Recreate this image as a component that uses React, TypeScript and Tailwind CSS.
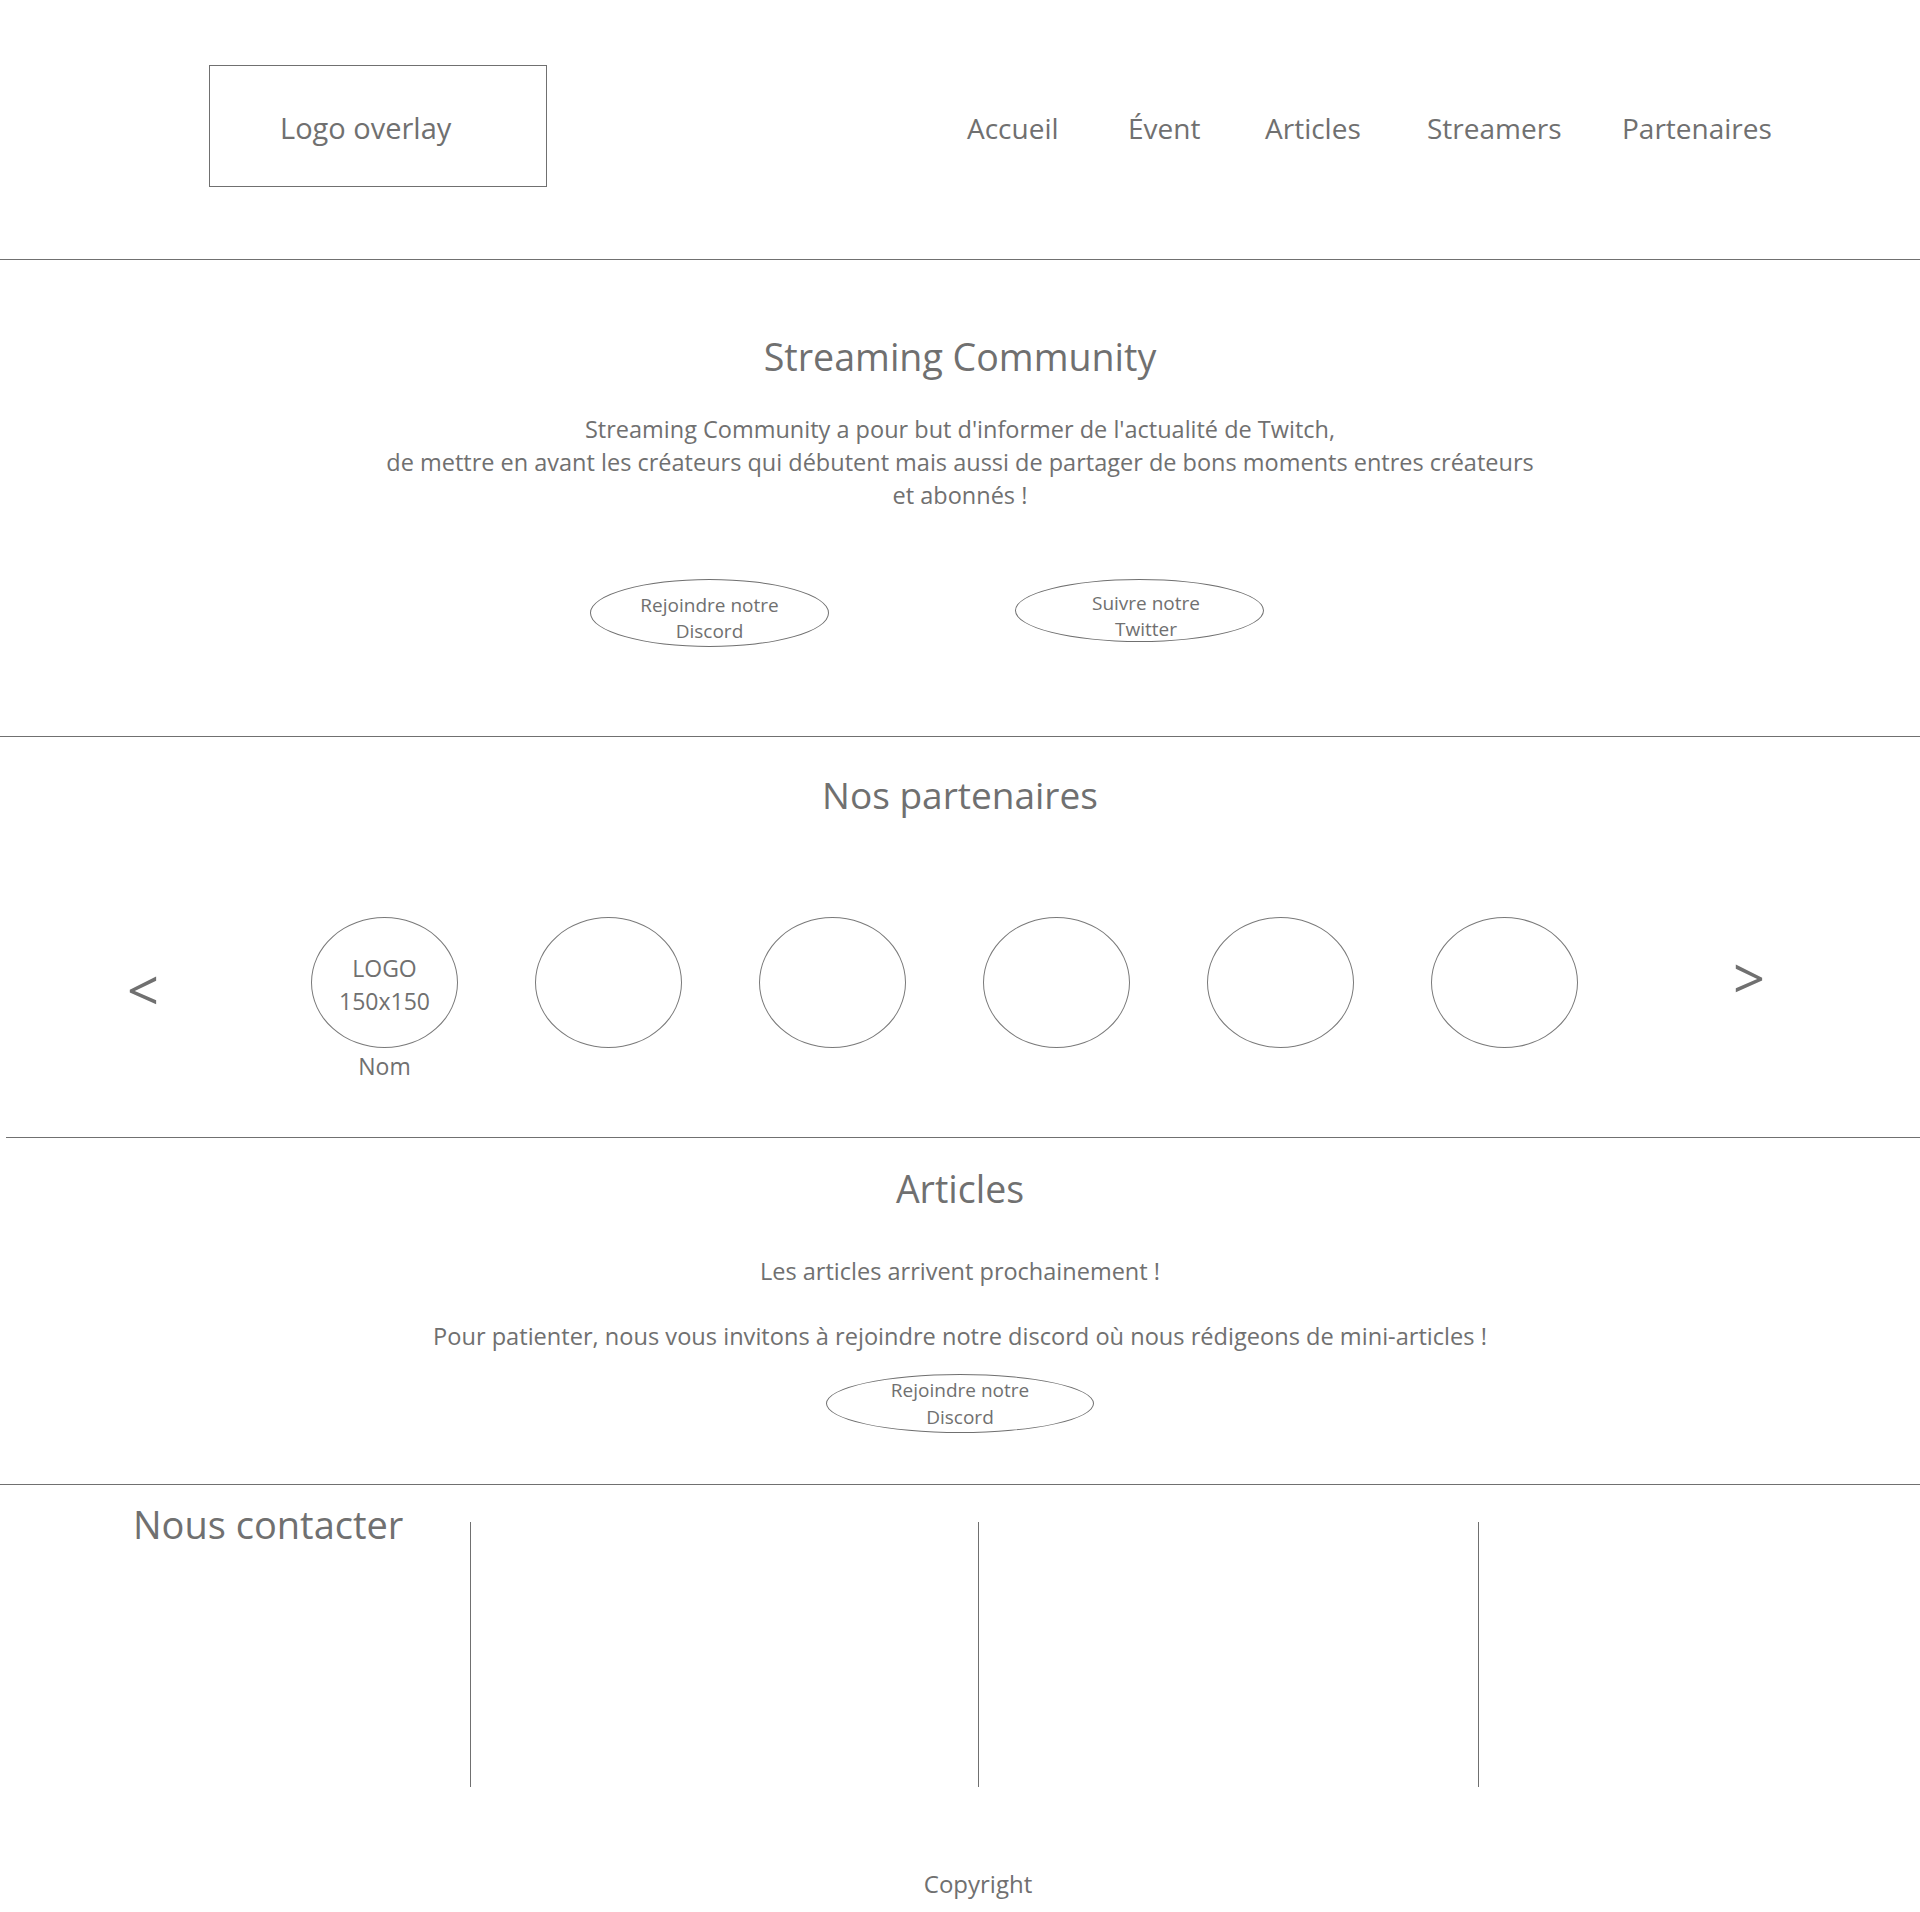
import React from "react";

function Pill({
  lines,
  className,
  textClass,
}: {
  lines: string[];
  className: string;
  textClass: string;
}) {
  return (
    <div
      className={`rounded-[50%] border border-[#707070] flex flex-col items-center justify-center text-center text-[19px] ${className}`}
    >
      <div className={textClass}>
        {lines.map((l) => (
          <div key={l}>{l}</div>
        ))}
      </div>
    </div>
  );
}

function Line({ className = "" }: { className?: string }) {
  return <div className={`h-px bg-[#707070] ${className}`} />;
}

export default function App() {
  const nav = [
    { label: "Accueil", w: "w-[161px]" },
    { label: "Évent", w: "w-[137px]" },
    { label: "Articles", w: "w-[162px]" },
    { label: "Streamers", w: "w-[195px]" },
    { label: "Partenaires", w: "w-[150px]" },
  ];
  const circles = [0, 1, 2, 3, 4, 5];

  return (
    <div className="w-[1920px] h-[1912px] overflow-hidden bg-white text-[#707070] font-['Open_Sans',sans-serif]">
      {/* Header */}
      <header className="h-[259px] flex items-start pt-[65px] pl-[209px]">
        <div className="w-[338px] h-[122px] border border-[#707070] flex items-center pl-[70px] pt-[3px] text-[29px] leading-[40px]">
          Logo overlay
        </div>
        <nav className="ml-[420px] h-[122px] flex items-center pt-[3px] text-[28px] leading-[40px]">
          {nav.map((n) => (
            <span key={n.label} className={n.w}>
              {n.label}
            </span>
          ))}
        </nav>
      </header>
      <Line />

      {/* Hero */}
      <section className="h-[476px] pt-[73px] flex flex-col items-center">
        <h1 className="text-[37.6px] leading-[48px]">Streaming Community</h1>
        <p className="mt-[32px] text-[23.5px] leading-[33px] text-center">
          Streaming Community a pour but d'informer de l'actualité de Twitch,
          <br />
          de mettre en avant les créateurs qui débutent mais aussi de partager de bons moments entres créateurs
          <br />
          et abonnés !
        </p>
        <div className="mt-[67px] self-start ml-[590px] flex items-start gap-[186px]">
          <Pill
            lines={["Rejoindre notre", "Discord"]}
            className="w-[239px] h-[68px] pt-[10px]"
            textClass="leading-[26px]"
          />
          <Pill
            lines={["Suivre notre", "Twitter"]}
            className="w-[249px] h-[63px] pt-[11px] pl-[13px]"
            textClass="leading-[26px]"
          />
        </div>
      </section>
      <Line />

      {/* Partners */}
      <section className="h-[400px] pt-[34px] flex flex-col">
        <h2 className="self-center text-[37px] leading-[48px]">Nos partenaires</h2>
        <div className="mt-[98px] flex items-start pl-[127px]">
          <span className="w-[184px] mt-[44px] text-[56px] leading-[56px]">&lt;</span>
          <div className="flex items-start gap-[77px]">
            {circles.map((i) => (
              <div key={i} className="flex flex-col items-center w-[147px]">
                <div className="w-[147px] h-[131px] rounded-[50%] border border-[#7a7a7a] flex flex-col items-center justify-center pt-[4px] text-[23px] leading-[33px] text-center">
                  {i === 0 && (
                    <>
                      <div>LOGO</div>
                      <div>150x150</div>
                    </>
                  )}
                </div>
                {i === 0 && (
                  <div className="mt-[2px] text-[23px] leading-[33px]">Nom</div>
                )}
              </div>
            ))}
          </div>
          <span className="ml-[155px] mt-[32px] text-[56px] leading-[56px]">&gt;</span>
        </div>
      </section>
      <Line className="ml-[6px]" />

      {/* Articles */}
      <section className="h-[346px] pt-[27px] flex flex-col items-center">
        <h2 className="text-[37.5px] leading-[48px]">Articles</h2>
        <p className="mt-[42px] text-[23.5px] leading-[33px]">Les articles arrivent prochainement !</p>
        <p className="mt-[32px] text-[23.6px] leading-[33px]">
          Pour patienter, nous vous invitons à rejoindre notre discord où nous rédigeons de mini-articles !
        </p>
        <Pill
          lines={["Rejoindre notre", "Discord"]}
          className="mt-[21px] w-[268px] h-[59px]"
          textClass="leading-[27px]"
        />
      </section>
      <Line />

      {/* Footer */}
      <footer className="h-[427px] flex flex-col">
        <div className="flex items-start">
          <div className="w-[470px] pl-[133px] pt-[15px]">
            <h2 className="text-[38px] leading-[48px]">Nous contacter</h2>
          </div>
          <div className="w-px h-[265px] mt-[37px] bg-[#707070]" />
          <div className="w-[507px]" />
          <div className="w-px h-[265px] mt-[37px] bg-[#707070]" />
          <div className="w-[499px]" />
          <div className="w-px h-[265px] mt-[37px] bg-[#707070]" />
        </div>
        <div className="mt-[81px] pl-[36px] text-center text-[24px] leading-[32px]">Copyright</div>
      </footer>
    </div>
  );
}
